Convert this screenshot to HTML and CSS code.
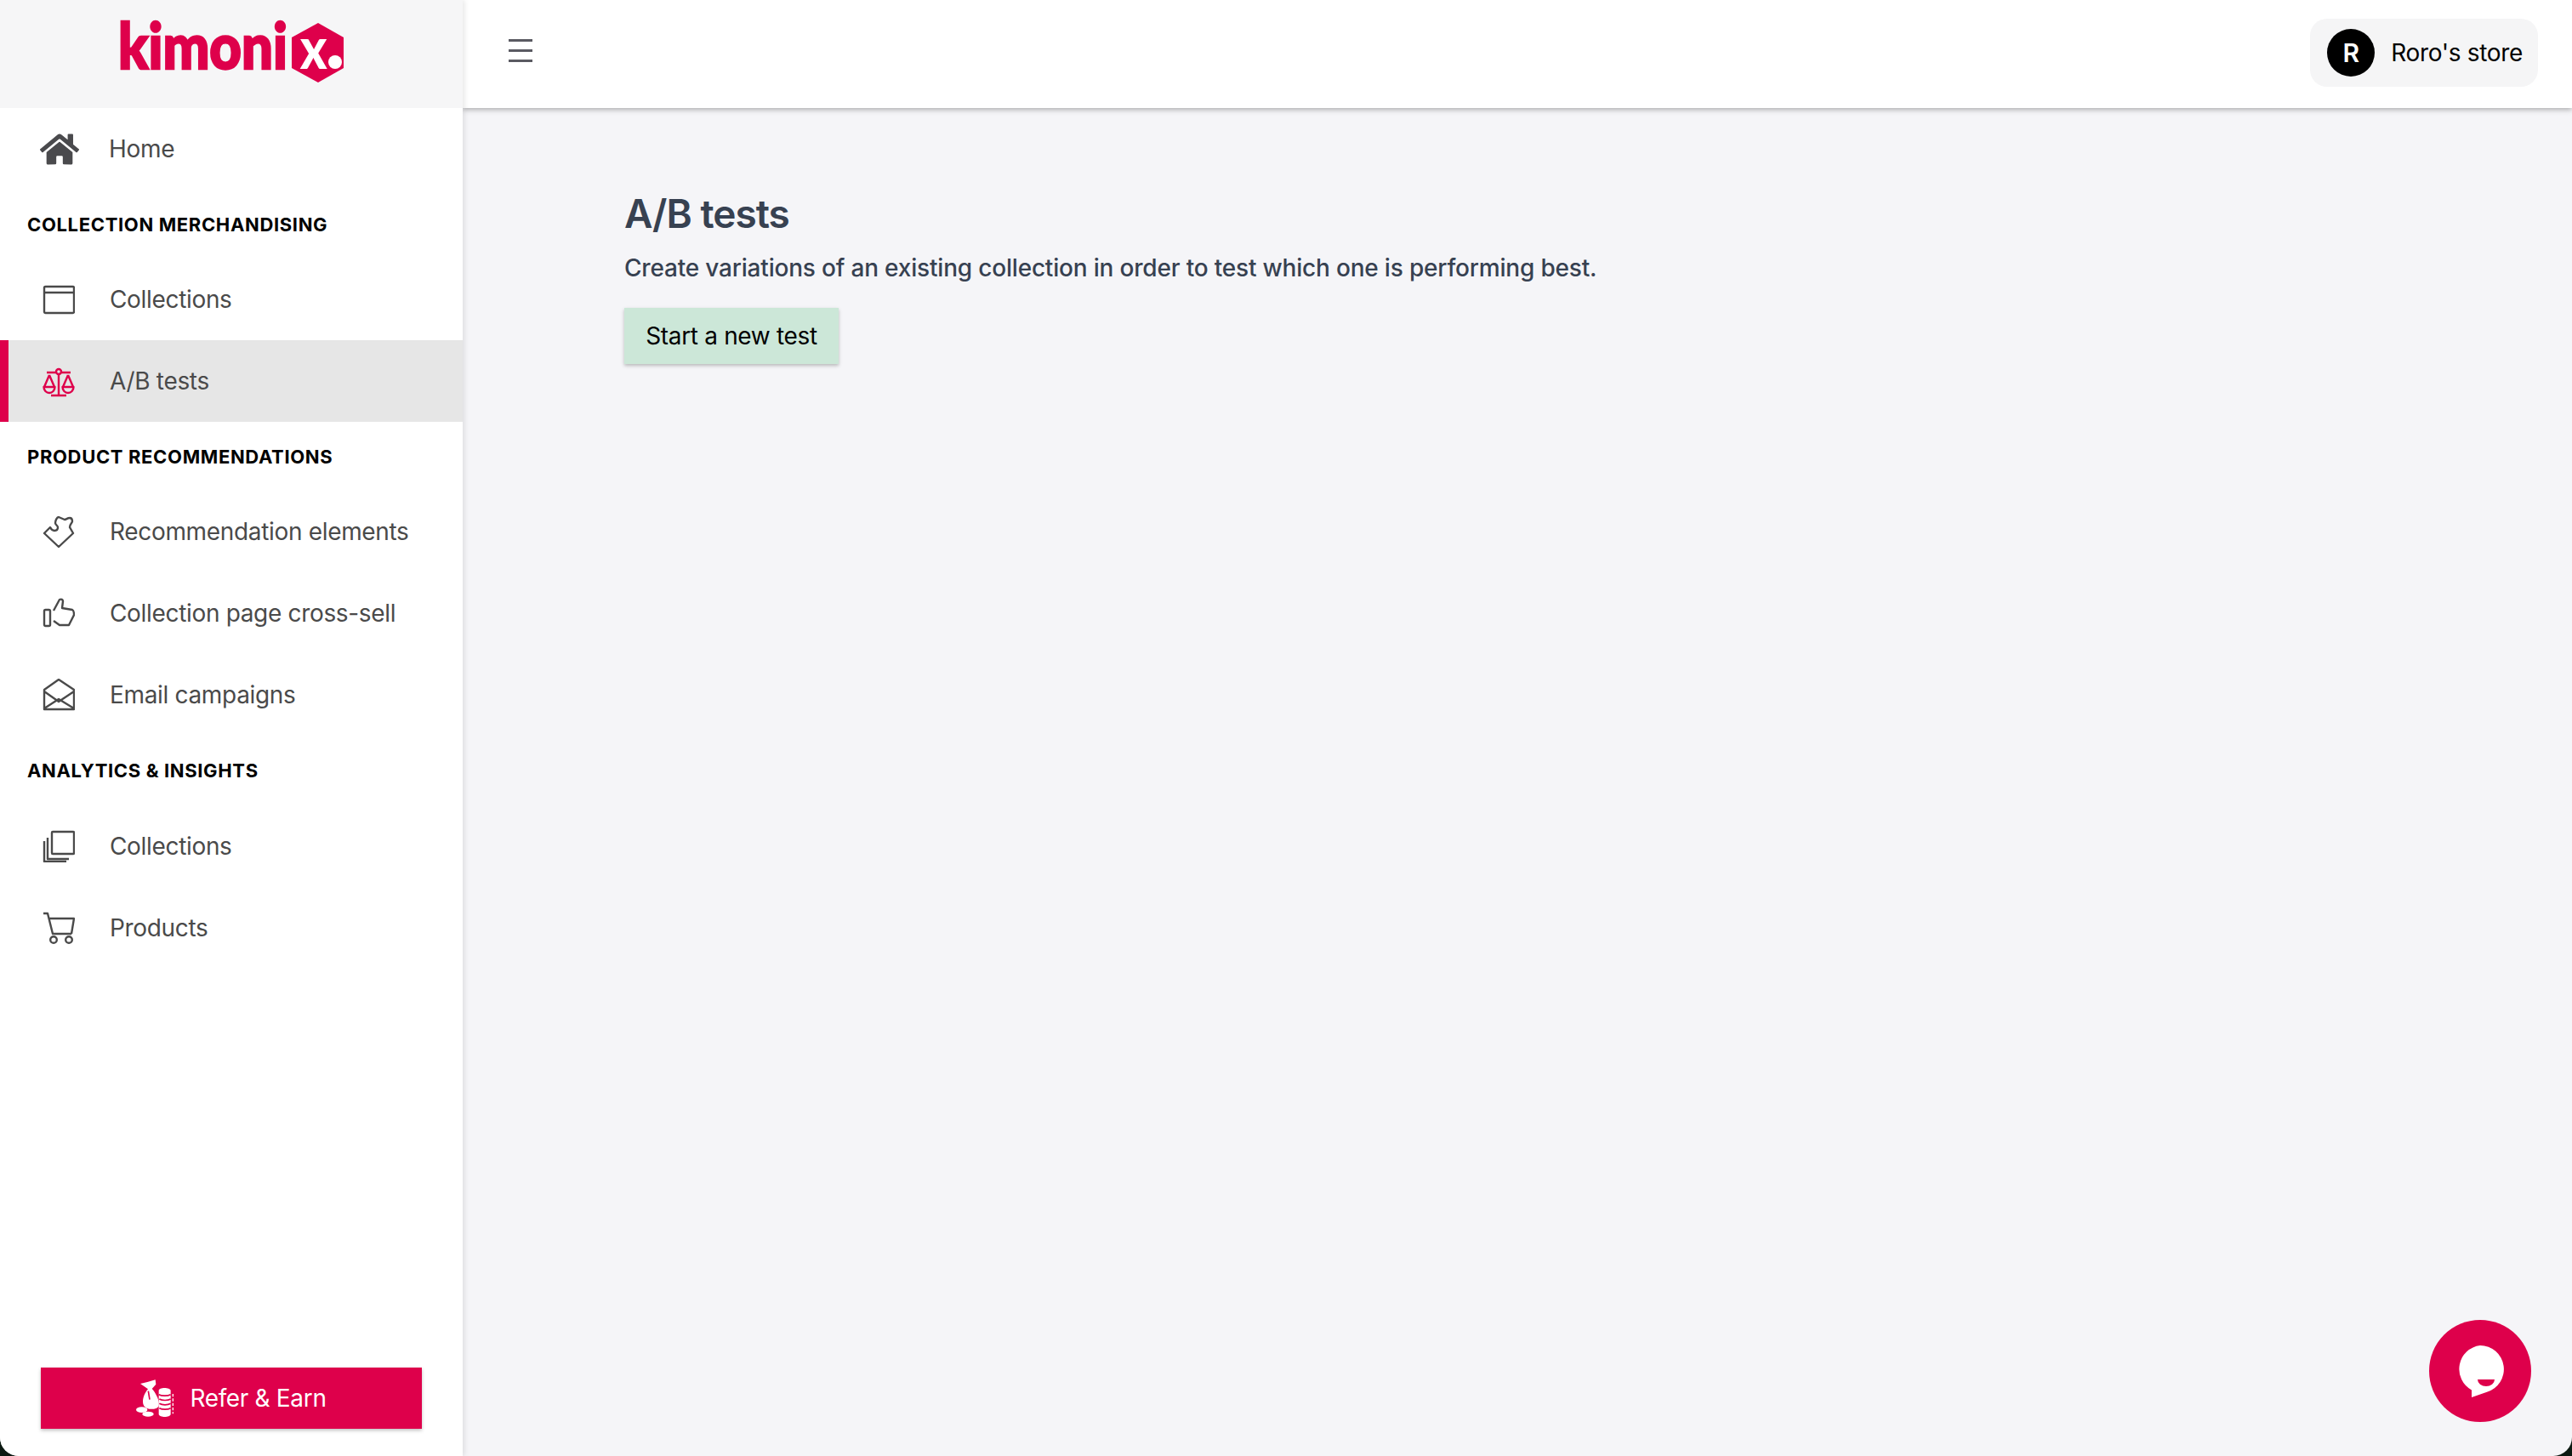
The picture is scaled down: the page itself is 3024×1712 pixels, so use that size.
FILE: index.html
```html
<!DOCTYPE html>
<html>
<head>
    <title>A/B tests - Kimonix</title>
    <link rel="stylesheet" href="styles.css">
</head>
<body>

<div class="app">
    <div class="sidebar">
        <div class="logo-box">
            <svg class="logo" width="264" height="70" viewBox="0 0 264 70">
                <polygon class="logo-hex" points="234,0 264,17 264,53 234,70 203,53 203,17"/>
                <text class="logo-word" transform="translate(-1 54) scale(.88 1)">kimoni<tspan class="logo-x" dx="17">x</tspan></text>
                <circle class="logo-dot" cx="254" cy="46" r="8"/>
            </svg>
        </div>

        <a class="nav-item">
            <svg class="nav-icon home" width="46" height="41" viewBox="0 0 576 512"><path d="M280.37 148.26L96 300.11V464a16 16 0 0 0 16 16l112.06-.29a16 16 0 0 0 15.92-16V368a16 16 0 0 1 16-16h64a16 16 0 0 1 16 16v95.64a16 16 0 0 0 16 16.05L464 480a16 16 0 0 0 16-16V300L295.67 148.26a12.19 12.19 0 0 0-15.3 0zM571.6 251.47L488 182.56V44.05a12 12 0 0 0-12-12h-56a12 12 0 0 0-12 12v72.61L318.47 43a48 48 0 0 0-61 0L4.34 251.47a12 12 0 0 0-1.6 16.9l25.5 31A12 12 0 0 0 45.15 301l235.22-193.74a12.19 12.19 0 0 1 15.3 0L530.9 301a12 12 0 0 0 16.9-1.6l25.5-31a12 12 0 0 0-1.7-16.93z"/></svg>
            <span>Home</span>
        </a>

        <div class="nav-section">Collection merchandising</div>
        <a class="nav-item">
            <svg class="nav-icon line" width="38" height="38" viewBox="0 0 38 38"><rect x="2" y="4" width="35" height="31" rx="1.5"/><path d="M2 11h35"/></svg>
            <span>Collections</span>
        </a>
        <a class="nav-item active">
            <svg class="nav-icon line" width="38" height="38" viewBox="0 0 38 38"><circle cx="19" cy="8" r="3"/><path d="M5 9h11M22 9h11M19 11v25M10 36h18M8 12L2 26M8 12l6 14M30 12l-6 14M30 12l6 14"/><path d="M1.5 26h13a6.5 7 0 0 1-13 0zM23.5 26h13a6.5 7 0 0 1-13 0z"/></svg>
            <span>A/B tests</span>
        </a>

        <div class="nav-section">Product recommendations</div>
        <a class="nav-item">
            <svg class="nav-icon line" width="38" height="38" viewBox="0 0 38 38"><path d="M19 37L2 21 9 14c1 2 3 4 5 4 3 0 4-2 4-4 0-2-3-3-3-5 0-3 2-7 4-7l7 3c2 0 3-2 6-2 2 0 3 2 3 4 0 2-3 3-3 7l4 7z"/></svg>
            <span>Recommendation elements</span>
        </a>
        <a class="nav-item">
            <svg class="nav-icon line" width="38" height="38" viewBox="0 0 38 38"><rect x="2" y="15" width="7" height="19" rx="1.5"/><path d="M13 16L20 3c2-1 4 0 4 2l-1 8 12 2c2 1 2 4 2 6L31 33H20l-7-5"/></svg>
            <span>Collection page cross-sell</span>
        </a>
        <a class="nav-item">
            <svg class="nav-icon line" width="38" height="38" viewBox="0 0 38 38"><path d="M2 36V13L19 1l18 12v23zM2 15l17 12 18-12M2 35l17-11 18 11"/></svg>
            <span>Email campaigns</span>
        </a>

        <div class="nav-section last">Analytics &amp; insights</div>
        <a class="nav-item">
            <svg class="nav-icon line" width="38" height="38" viewBox="0 0 38 38"><rect x="11" y="2" width="26" height="26" rx="1"/><path d="M6 9v25h25M2 13v24h26"/></svg>
            <span>Collections</span>
        </a>
        <a class="nav-item">
            <svg class="nav-icon line" width="38" height="38" viewBox="0 0 38 38"><path d="M1 2h5l6 24h22M7 8h30l-3 18"/><circle cx="13" cy="33" r="3.8"/><circle cx="31" cy="33" r="3.8"/></svg>
            <span>Products</span>
        </a>

        <div class="sidebar-foot">
            <button class="refer-btn">
                <svg class="refer-icon" width="46" height="44" viewBox="30 21 138 132">
                    <path d="M45 36l25-6 28-8 2 16-14 16 3 3c14 18 24 40 21 56-2 10-18 14-34 12-12-2-22-10-22-26 0-16 8-32 18-44z"/>
                    <ellipse cx="50" cy="128" rx="20" ry="10"/>
                    <ellipse cx="72" cy="143" rx="20" ry="9"/>
                    <path d="M110 60c0-12 40-12 42 0v84c-2 12-40 12-42 0z"/>
                    <path class="refer-cut" d="M110 74c10 6 32 6 42 0M112 90c10 6 30 6 40 0M112 106c10 6 30 6 40 0M112 122c10 6 30 6 40 0M73 62l5 30"/>
                    <path class="refer-dash" d="M160 72v70"/>
                </svg>
                Refer &amp; Earn
            </button>
        </div>
    </div>

    <div class="main">
        <div class="topbar">
            <div class="burger"><i></i><i></i><i></i></div>
            <div class="store">
                <div class="avatar">R</div>
                <span>Roro's store</span>
            </div>
        </div>
        <div class="content">
            <h1>A/B tests</h1>
            <p>Create variations of an existing collection in order to test which one is performing best.</p>
            <button class="start-btn">Start a new test</button>
        </div>
        <div class="chat">
            <svg width="60" height="64" viewBox="0 0 60 64">
                <path class="chat-bubble" d="M30 2a28 28 0 0 1 8 54.8L20 63v-8.6A28 28 0 0 1 30 2z"/>
                <path class="chat-smile" d="M27 42h20a10 8 0 0 1-20 0z"/>
            </svg>
        </div>
    </div>
</div>

</body>
</html>
```

FILE: styles.css
```css
* {
    box-sizing: border-box;
}

html, body {
    margin: 0;
    height: 100%;
    background: #0c1a12;
}

body {
    font-family: Inter, "Liberation Sans", sans-serif;
    font-size: 28px;
    letter-spacing: -0.33px;
    overflow: hidden;
}

.app {
    display: flex;
    height: 1712px;
    background: #f5f5f8;
    border-radius: 0 0 22px 22px;
    overflow: hidden;
}

/* sidebar */
.sidebar {
    width: 544px;
    flex-shrink: 0;
    display: flex;
    flex-direction: column;
    background: #fff;
    box-shadow: 2px 0 6px rgba(0,0,0,0.1);
    position: relative;
    z-index: 2;
}

.logo-box {
    height: 127px;
    flex-shrink: 0;
    padding: 27px 0 0 140px;
    background: #f6f6f7;
}

.logo {
    display: block;
    overflow: visible;
}

.logo-word {
    font-family: Lato, sans-serif;
    font-weight: 900;
    font-size: 74px;
    letter-spacing: 0;
    fill: #de004b;
    stroke: #de004b;
    stroke-width: 2.5;
}

.logo-hex {
    fill: #de004b;
}

.logo-x {
    font-size: 68px;
    fill: #fff;
    stroke: none;
}

.logo-dot {
    fill: #fff;
}

.nav-item {
    height: 96px;
    flex-shrink: 0;
    display: flex;
    align-items: center;
    padding-left: 50px;
    color: #4a4a4a;
}

.nav-item span {
    margin-left: 41px;
}

.nav-icon {
    width: 38px;
    flex-shrink: 0;
}

.nav-icon.home {
    width: 46px;
    margin: 0 -6px 0 -3px;
    fill: #4a4a4d;
}

.line {
    fill: none;
    stroke: #4a4a4a;
    stroke-width: 2.4;
    stroke-linejoin: round;
}

.nav-item.active {
    background: #e6e6e6;
    border-left: 10px solid #de004b;
    padding-left: 40px;
}

.nav-item.active .line {
    stroke: #de004b;
}

.nav-section {
    height: 81px;
    flex-shrink: 0;
    display: flex;
    align-items: center;
    padding-left: 32px;
    font-size: 22px;
    font-weight: 700;
    letter-spacing: 0.65px;
    text-transform: uppercase;
    color: #000;
}

.nav-section.last {
    height: 82px;
    padding-bottom: 1px;
}

.sidebar-foot {
    margin-top: auto;
    padding: 0 48px 32px;
}

.refer-btn {
    width: 100%;
    height: 72px;
    display: flex;
    align-items: center;
    justify-content: center;
    gap: 17px;
    border: 0;
    background: #de004b;
    color: #fff;
    font-family: inherit;
    font-size: 28px;
    letter-spacing: inherit;
    box-shadow: 0 2px 4px rgba(0,0,0,0.25);
}

.refer-icon {
    fill: #fff;
}

.refer-cut {
    fill: none;
    stroke: #de004b;
    stroke-width: 5;
}

.refer-dash {
    fill: none;
    stroke: #fff;
    stroke-width: 4;
    stroke-dasharray: 10 6;
}

/* top bar */
.main {
    flex: 1;
    position: relative;
}

.topbar {
    height: 127px;
    display: flex;
    align-items: center;
    justify-content: space-between;
    padding: 0 40px 0 54px;
    background: #fff;
    box-shadow: 0 2px 6px rgba(0,0,0,0.3);
}

.burger {
    display: flex;
    flex-direction: column;
    gap: 9px;
    margin-top: -8px;
    width: 28px;
}

.burger i {
    display: block;
    height: 3px;
    background: #5a5a62;
}

.store {
    height: 80px;
    margin-top: -3px;
    display: flex;
    align-items: center;
    gap: 19px;
    padding: 0 18px 0 20px;
    background: #f5f5f6;
    border-radius: 20px;
    color: #000;
}

.avatar {
    width: 56px;
    height: 56px;
    display: flex;
    align-items: center;
    justify-content: center;
    border-radius: 50%;
    background: #000;
    color: #fff;
    font-size: 30px;
    font-weight: 600;
}

/* page */
.content {
    padding: 96px 0 0 190px;
}

.content h1 {
    margin: 0;
    font-size: 46px;
    line-height: 56px;
    font-weight: 600;
    letter-spacing: -1px;
    color: #374151;
}

.content p {
    margin: 16px 0 0;
    font-size: 28px;
    line-height: 40px;
    font-weight: 500;
    letter-spacing: -0.19px;
    color: #374151;
}

.start-btn {
    display: block;
    margin-top: 27px;
    width: 252px;
    height: 66px;
    border: 0;
    background: #cce7d8;
    color: #000;
    font-family: inherit;
    font-size: 28px;
    letter-spacing: inherit;
    padding: 0;
    box-shadow: 0 2px 4px rgba(0,0,0,0.25);
}

.chat {
    position: absolute;
    right: 48px;
    bottom: 40px;
    width: 120px;
    height: 120px;
    display: flex;
    align-items: center;
    justify-content: center;
    border-radius: 50%;
    background: #de004b;
}

.chat-bubble {
    fill: #fff;
}

.chat-smile {
    fill: #de004b;
}
```
